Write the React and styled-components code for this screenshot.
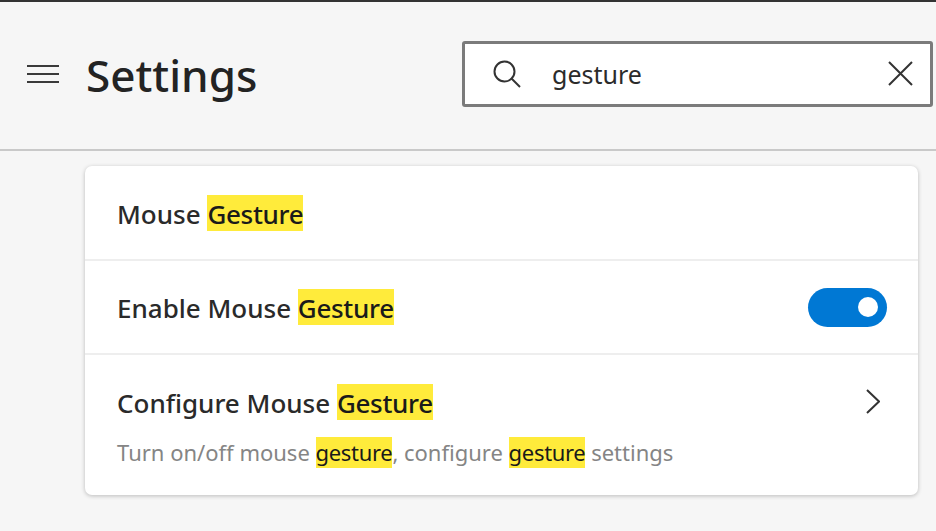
import React from 'react';
import styled, { createGlobalStyle } from 'styled-components';

const GlobalStyle = createGlobalStyle`
  html, body {
    margin: 0;
    padding: 0;
    height: 100%;
    overflow: hidden;
    background: #f6f6f6;
    font-family: "Noto Sans", "Open Sans", "Liberation Sans", sans-serif;
    color: #262626;
  }
`;

const Page = styled.div`
  width: 936px;
  height: 531px;
  box-sizing: border-box;
  border-top: 2px solid #333;
`;

const Header = styled.header`
  height: 147px;
  box-sizing: content-box;
  display: flex;
  align-items: center;
  padding: 0 3px 0 27px;
  border-bottom: 2px solid #c9c9c9;
`;

const MenuButton = styled.svg`
  width: 32px;
  height: 18px;
  flex-shrink: 0;
  margin-top: -4px;
`;

const Title = styled.h1`
  margin: -2px 0 0 27px;
  font-size: 44px;
  line-height: 60px;
  font-weight: 500;
  color: #232323;
`;

const SearchBox = styled.div`
  margin: -4px 0 0 auto;
  width: 471px;
  height: 66px;
  box-sizing: border-box;
  display: flex;
  align-items: center;
  padding: 0 17px 0 28px;
  background: #fff;
  border: 3px solid #7b7b7b;
  border-radius: 3px;
`;

const SearchText = styled.span`
  margin-left: 31px;
  font-size: 25px;
  color: #2b2b2b;
  flex: 1;
`;

const Card = styled.section`
  width: 833px;
  margin: 15px 0 0 85px;
  background: #fff;
  border-radius: 7px;
  box-shadow: 0 1px 4px rgba(0, 0, 0, 0.24);
`;

const Row = styled.div`
  height: ${props => props.$height}px;
  box-sizing: border-box;
  display: flex;
  align-items: center;
  justify-content: space-between;
  padding: 0 31px 0 32px;
  & + & {
    border-top: 2px solid #eeeeee;
  }
`;

const ConfigRow = styled(Row)`
  align-items: flex-start;
  padding-top: 29px;
  padding-right: 38px;
`;

const Label = styled.div`
  height: 36px;
  font-size: 26px;
  line-height: 38px;
  font-weight: 480;
  color: #2a2a2a;
  white-space: nowrap;
  mark {
    height: 36px;
  }
`;

const Description = styled.div`
  margin-top: 17px;
  font-size: 22px;
  line-height: 31px;
  color: #858585;
  white-space: nowrap;
`;

const Highlight = styled.mark`
  display: inline-block;
  background: #ffeb3b;
  color: #1a1a1a;
  letter-spacing: -0.32px;
`;

const Toggle = styled.div`
  width: 79px;
  height: 39px;
  box-sizing: border-box;
  display: flex;
  align-items: center;
  justify-content: flex-end;
  padding-right: 9px;
  background: #0078d4;
  border-radius: 20px;
`;

const ToggleKnob = styled.span`
  width: 20px;
  height: 20px;
  background: #fff;
  border-radius: 50%;
`;

const Icon = styled.svg`
  flex-shrink: 0;
  fill: none;
  stroke: ${props => props.$stroke || '#333'};
  stroke-width: ${props => props.$weight || 2};
`;

const Chevron = styled(Icon)`
  margin-top: 5px;
`;

export default function App() {
  return (
    <Page>
      <GlobalStyle />
      <Header>
        <MenuButton viewBox="0 0 32 18" fill="none" stroke="#3a3a3a" strokeWidth="2">
          <path d="M0 1H32M0 9H32M0 17H32" />
        </MenuButton>
        <Title>Settings</Title>
        <SearchBox>
          <Icon width="28" height="28" viewBox="0 0 28 28">
            <circle cx="11.5" cy="11.5" r="10" />
            <path d="M18.5 18.5L27 27" />
          </Icon>
          <SearchText>gesture</SearchText>
          <Icon width="25" height="25" viewBox="0 0 25 25">
            <path d="M1 1L24 24M24 1L1 24" />
          </Icon>
        </SearchBox>
      </Header>
      <Card>
        <Row $height={93}>
          <Label>
            Mouse <Highlight>Gesture</Highlight>
          </Label>
        </Row>
        <Row $height={94}>
          <Label>
            Enable Mouse <Highlight>Gesture</Highlight>
          </Label>
          <Toggle>
            <ToggleKnob />
          </Toggle>
        </Row>
        <ConfigRow $height={142}>
          <div>
            <Label>
              Configure Mouse <Highlight>Gesture</Highlight>
            </Label>
            <Description>
              Turn on/off mouse <Highlight>gesture</Highlight>, configure <Highlight>gesture</Highlight> settings
            </Description>
          </div>
          <Chevron width="14" height="25" viewBox="0 0 14 25">
            <path d="M1 1L13 12.5L1 24" />
          </Chevron>
        </ConfigRow>
      </Card>
    </Page>
  );
}
